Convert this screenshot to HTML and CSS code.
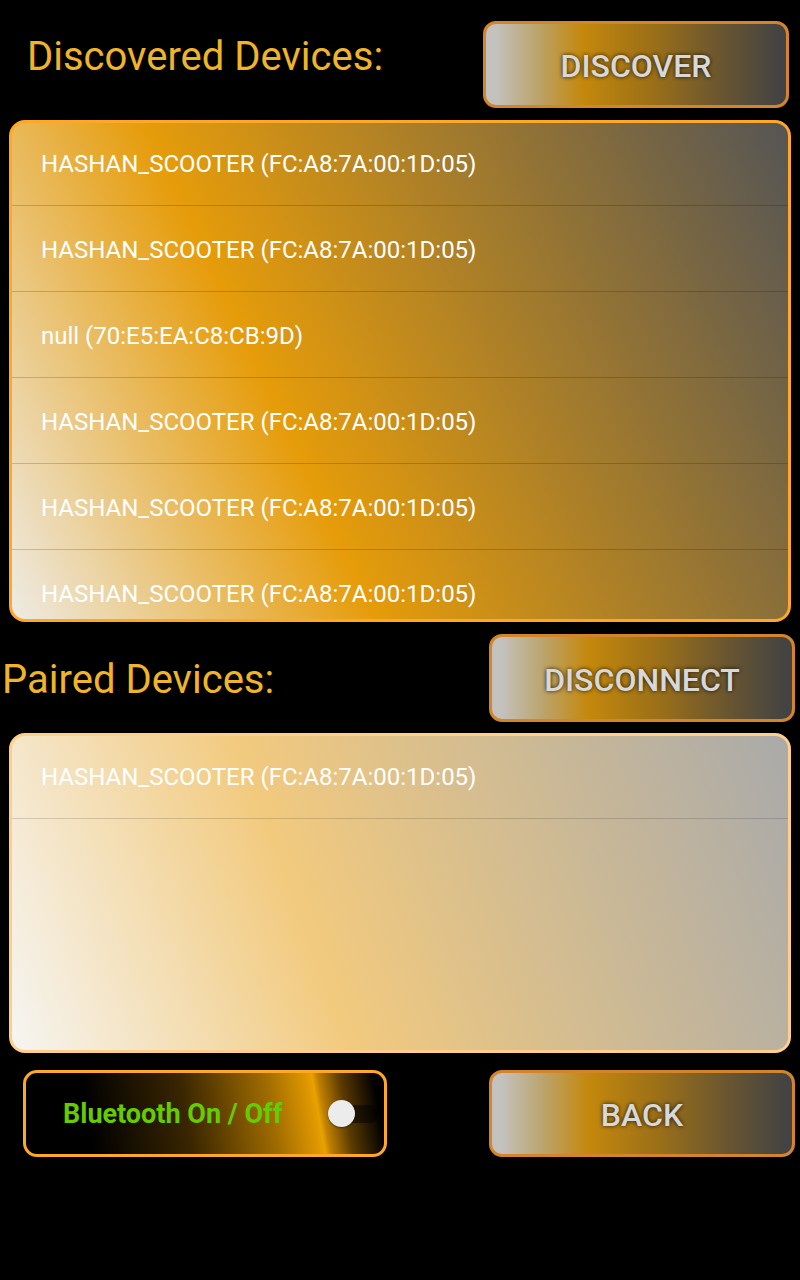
FILE: index.html
```html
<!DOCTYPE html>
<html lang="en">
<head>
<meta charset="utf-8">
<title>Bluetooth Devices</title>
<link rel="stylesheet" href="styles.css">
</head>
<body>
<div class="screen">
  <div class="head head-top">
    <h1 class="title">Discovered Devices:</h1>
    <button class="btn btn-discover">DISCOVER</button>
  </div>
  <ul class="list list-found">
    <li>HASHAN_SCOOTER (FC:A8:7A:00:1D:05)</li>
    <li>HASHAN_SCOOTER (FC:A8:7A:00:1D:05)</li>
    <li>null (70:E5:EA:C8:CB:9D)</li>
    <li>HASHAN_SCOOTER (FC:A8:7A:00:1D:05)</li>
    <li>HASHAN_SCOOTER (FC:A8:7A:00:1D:05)</li>
    <li>HASHAN_SCOOTER (FC:A8:7A:00:1D:05)</li>
  </ul>
  <div class="head head-paired">
    <h2 class="title title-paired">Paired Devices:</h2>
    <button class="btn btn-disconnect">DISCONNECT</button>
  </div>
  <ul class="list list-paired">
    <li>HASHAN_SCOOTER (FC:A8:7A:00:1D:05)</li>
  </ul>
  <div class="foot">
    <label class="bt-toggle">
      <span class="bt-label">Bluetooth On / Off</span>
      <span class="switch"><span class="thumb"></span></span>
    </label>
    <button class="btn btn-back">BACK</button>
  </div>
</div>
</body>
</html>
```
FILE: styles.css
```css
html, body {
  margin: 0;
  padding: 0;
  background: #000;
}
body {
  font-family: Roboto, "Noto Sans", "Liberation Sans", sans-serif;
}
.screen {
  width: 800px;
  height: 1280px;
  overflow: hidden;
}
.head {
  display: flex;
  justify-content: space-between;
  align-items: flex-start;
}
.head-top {
  height: 120px;
}
.head-paired {
  height: 111px;
}
.title {
  margin: 33px 0 0 27px;
  font-size: 40px;
  line-height: 48px;
  font-weight: 400;
  color: #f0b429;
  white-space: nowrap;
}
.title-paired {
  margin: 34px 0 0 2px;
}
.btn {
  width: 306px;
  height: 87px;
  box-sizing: border-box;
  padding: 3px 0 0;
  border: 3px solid #d4842a;
  border-radius: 13px;
  background: linear-gradient(90deg, #c4c2be 3%, #bba46c 17%, #c4880c 32%, #9c7018 55%, #6a5630 78%, #434343 98%);
  color: #d8d8d8;
  font-family: Roboto, "Noto Sans", sans-serif;
  font-weight: 500;
  font-size: 32px;
  text-shadow: 0 0 4px rgba(0, 0, 0, 0.85);
  cursor: pointer;
}
.btn-discover {
  margin: 21px 11px 0 0;
}
.btn-disconnect {
  margin: 12px 5px 0 0;
  height: 88px;
}
.btn-back {
  margin-right: 5px;
}
.list {
  list-style: none;
  margin: 0 9px;
  padding: 0;
  box-sizing: border-box;
  border: 3px solid #ffa726;
  border-radius: 16px;
  overflow: hidden;
}
.list li {
  height: 86px;
  box-sizing: border-box;
  padding: 2px 0 0 29px;
  border-bottom: 1px solid rgba(0, 0, 0, 0.18);
  display: flex;
  align-items: center;
  font-size: 24px;
  color: #fff;
  white-space: nowrap;
}
.list li:first-child {
  margin-top: -3px;
}
.list-found {
  height: 502px;
  background: linear-gradient(65deg, #eeebe4 0%, #e69c0a 36%, #555555 100%);
}
.list-paired {
  height: 320px;
  border-color: #ffcf8a;
  background: linear-gradient(70deg, #f6f5f2 0%, #f2ca7e 38%, #aaaaaa 100%);
}
.list-paired li {
  border-bottom-color: rgba(0, 0, 0, 0.14);
}
.foot {
  display: flex;
  justify-content: space-between;
  margin-top: 17px;
}
.bt-toggle {
  margin-left: 23px;
  width: 364px;
  height: 87px;
  box-sizing: border-box;
  border: 3px solid #ffa726;
  border-radius: 14px;
  background: linear-gradient(80deg, #000 0%, #000 18%, #3a2600 45%, #a06c00 68%, #e09800 79%, #e8a200 80.5%, #c08000 82%, #5a3a00 88%, #000 97%);
  display: flex;
  align-items: center;
  padding-left: 37px;
}
.bt-label {
  font-weight: 700;
  font-size: 27px;
  color: #66cc00;
  white-space: nowrap;
}
.switch {
  position: relative;
  margin-left: auto;
  margin-right: 6px;
  width: 48px;
  height: 18px;
  border-radius: 9px;
  background: rgba(0, 0, 0, 0.5);
}
.thumb {
  position: absolute;
  left: -2px;
  top: -5px;
  width: 27px;
  height: 27px;
  border-radius: 50%;
  background: #ececec;
  box-shadow: 0 1px 2px rgba(0, 0, 0, 0.45);
}
```
